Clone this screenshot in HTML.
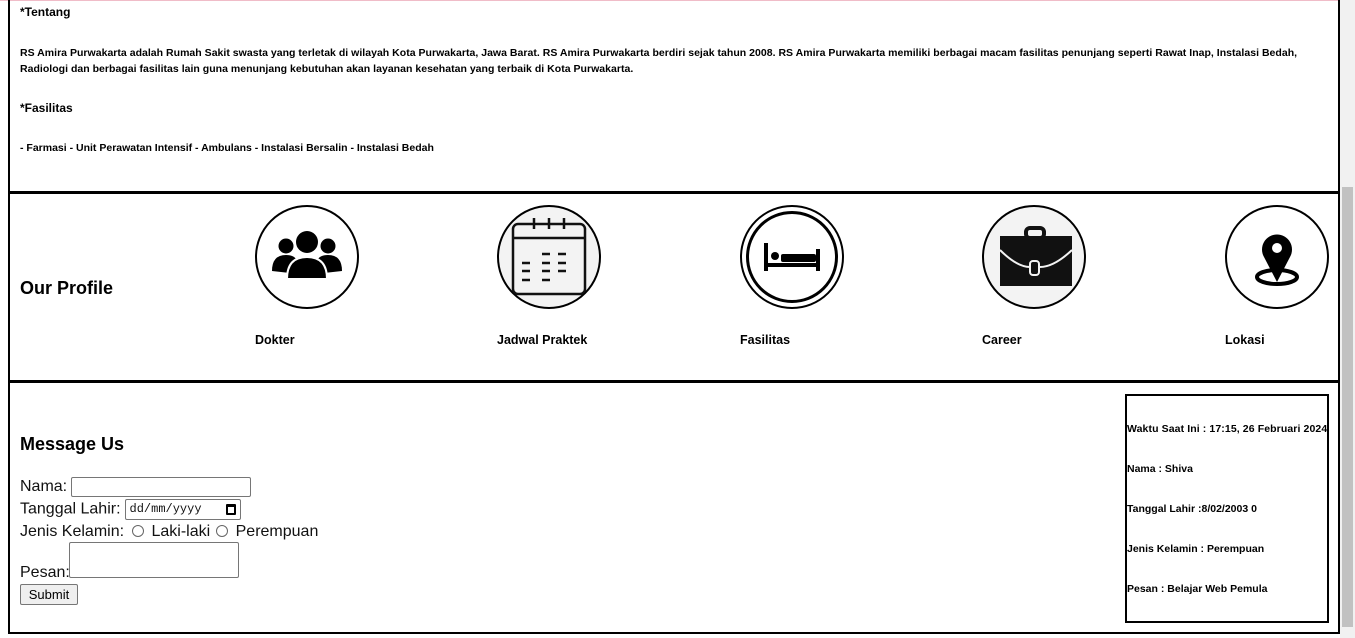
<!DOCTYPE html>
<html><head><meta charset="utf-8"><style>
*{margin:0;padding:0;box-sizing:border-box}
body{width:1355px;height:638px;overflow:hidden;background:#fff;font-family:"Liberation Sans",Arial,sans-serif;color:#000;position:relative}
.a{position:absolute;white-space:nowrap}
.b{font-weight:bold}
.sm{font-size:10.5px;font-weight:bold}
.lbl{font-size:12.5px;font-weight:bold;top:333px}
.circ{position:absolute;width:104px;height:104px;border:2px solid #000;border-radius:50%;top:205px}
.f{font-size:16px;color:#111}
input,textarea,button{font-family:"Liberation Sans",Arial,sans-serif}
</style></head><body>
<div class="a" style="left:0;top:0;width:1340px;height:1px;background:#f0bcc8"></div>
<div class="a" style="left:1340px;top:0;width:15px;height:638px;background:#f1f1f1"></div>
<div class="a" style="left:1342px;top:187px;width:11px;height:440px;background:#c1c1c1"></div>
<div class="a" style="left:8px;top:0;width:2px;height:634px;background:#000"></div>
<div class="a" style="left:1338px;top:0;width:2px;height:634px;background:#000"></div>
<div class="a" style="left:8px;top:191px;width:1332px;height:3px;background:#000"></div>
<div class="a" style="left:8px;top:380px;width:1332px;height:3px;background:#000"></div>
<div class="a" style="left:8px;top:632px;width:1332px;height:2px;background:#000"></div>

<div class="a b" style="left:20px;top:5px;font-size:12px">*Tentang</div>
<div class="a sm" style="left:20px;top:45px;line-height:16px;letter-spacing:0.02px">RS Amira Purwakarta adalah Rumah Sakit swasta yang terletak di wilayah Kota Purwakarta, Jawa Barat. RS Amira Purwakarta berdiri sejak tahun 2008. RS Amira Purwakarta memiliki berbagai macam fasilitas penunjang seperti Rawat Inap, Instalasi Bedah,<br>Radiologi dan berbagai fasilitas lain guna menunjang kebutuhan akan layanan kesehatan yang terbaik di Kota Purwakarta.</div>
<div class="a b" style="left:20px;top:101px;font-size:12px">*Fasilitas</div>
<div class="a sm" style="left:20px;top:142px">- Farmasi - Unit Perawatan Intensif - Ambulans - Instalasi Bersalin - Instalasi Bedah</div>

<div class="a b" style="left:20px;top:278px;font-size:18px">Our Profile</div>

<div class="circ" style="left:255px"></div>
<svg class="a" style="left:255px;top:205px" width="104" height="104" viewBox="0 0 104 104">
<circle cx="52" cy="37" r="11"/><circle cx="31" cy="41" r="7.5"/><circle cx="73" cy="41" r="7.5"/>
<path d="M17 66 Q17 50 31 50 Q40 50 42 56 Q36 60 35 68 Z"/><path d="M87 66 Q87 50 73 50 Q64 50 62 56 Q68 60 69 68 Z"/>
<path d="M32 74 Q32 52 52 52 Q72 52 72 74 Z" stroke="#fff" stroke-width="2"/>
</svg>
<div class="a lbl" style="left:255px">Dokter</div>

<div class="circ" style="left:497px;background:#f3f3f3"></div>
<svg class="a" style="left:497px;top:205px" width="104" height="104" viewBox="0 0 104 104" fill="none" stroke="#111" stroke-width="2.5">
<rect x="16" y="19" width="72" height="70" rx="5"/><line x1="16" y1="33" x2="88" y2="33"/>
<line x1="37" y1="13" x2="37" y2="24"/><line x1="52" y1="13" x2="52" y2="24"/><line x1="67" y1="13" x2="67" y2="24"/>
<path d="M45 49h8M61 49h8M25 58h8M45 58h8M61 58h8M25 66h8M45 66h8M61 66h8M25 75h8M45 75h8"/>
</svg>
<div class="a lbl" style="left:497px">Jadwal Praktek</div>

<div class="circ" style="left:740px"></div>
<div class="a" style="left:746px;top:211px;width:92px;height:92px;border:3px solid #000;border-radius:50%"></div>
<svg class="a" style="left:740px;top:205px" width="104" height="104" viewBox="0 0 104 104">
<rect x="24" y="38" width="4" height="28"/><rect x="76" y="44" width="4" height="22"/><rect x="24" y="58" width="56" height="4"/>
<circle cx="35" cy="51" r="4"/><rect x="41" y="49" width="35" height="8" rx="2"/>
</svg>
<div class="a lbl" style="left:740px">Fasilitas</div>

<div class="circ" style="left:982px;background:#f3f3f3"></div>
<svg class="a" style="left:982px;top:205px" width="104" height="104" viewBox="0 0 104 104">
<rect x="44" y="23" width="18" height="10" rx="4" fill="none" stroke="#111" stroke-width="4"/>
<rect x="18" y="31" width="72" height="50" fill="#111"/>
<path d="M18 45 Q35 62 48 62 M58 62 Q72 62 90 45" stroke="#f3f3f3" stroke-width="2" fill="none"/>
<rect x="48" y="56" width="9" height="14" rx="3" fill="#111" stroke="#f3f3f3" stroke-width="2"/>
</svg>
<div class="a lbl" style="left:982px">Career</div>

<div class="circ" style="left:1225px"></div>
<svg class="a" style="left:1225px;top:205px" width="104" height="104" viewBox="0 0 104 104">
<ellipse cx="52" cy="72" rx="20" ry="7" fill="none" stroke="#000" stroke-width="4"/>
<path d="M52 77 L39 52 A15 15 0 1 1 65 52 Z"/><circle cx="52" cy="43" r="5" fill="#fff"/>
</svg>
<div class="a lbl" style="left:1225px">Lokasi</div>

<div class="a b" style="left:20px;top:434px;font-size:18px">Message Us</div>
<div class="a f" style="left:20px;top:477px">Nama:<input style="width:180px;height:20px;border:1px solid #767676;border-radius:2px;vertical-align:middle;margin-left:4px"></div>
<div class="a f" style="left:20px;top:499px">Tanggal Lahir:<span style="display:inline-block;width:116px;height:21px;border:1px solid #767676;border-radius:2px;vertical-align:middle;font-family:'Liberation Mono',monospace;font-size:12px;padding:2px 4px;position:relative;margin-left:4px">dd/mm/yyyy<span style="position:absolute;right:4px;top:4px;width:10px;height:11px;border:2px solid #000;border-top-width:3px;border-radius:1px"></span></span></div>
<div class="a f" style="left:20px;top:523px">Jenis Kelamin:<span style="display:inline-block;width:12px;height:12px;border:1px solid #666;border-radius:50%;vertical-align:-1px;margin:0 3px 0 8px"></span> Laki-laki<span style="display:inline-block;width:12px;height:12px;border:1px solid #666;border-radius:50%;vertical-align:-1px;margin:0 3px 0 6px"></span> Perempuan</div>
<div class="a f" style="left:20px;top:564px">Pesan:</div>
<div class="a" style="left:69px;top:542px;width:170px;height:36px;border:1px solid #767676;border-radius:2px"></div>
<div class="a" style="left:20px;top:584px;width:58px;height:21px;border:1px solid #767676;border-radius:2px;background:#efefef;font-size:13px;text-align:center;line-height:19px">Submit</div>

<div class="a" style="left:1125px;top:394px;width:204px;height:229px;border:2px solid #000"></div>
<div class="a sm" style="left:1127px;top:423px;letter-spacing:0.1px">Waktu Saat Ini : 17:15, 26 Februari 2024</div>
<div class="a sm" style="left:1127px;top:463px">Nama : Shiva</div>
<div class="a sm" style="left:1127px;top:503px">Tanggal Lahir :8/02/2003 0</div>
<div class="a sm" style="left:1127px;top:543px">Jenis Kelamin : Perempuan</div>
<div class="a sm" style="left:1127px;top:583px">Pesan : Belajar Web Pemula</div>
</body></html>
